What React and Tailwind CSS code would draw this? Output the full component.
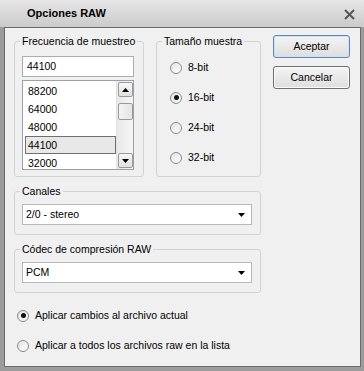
import React from 'react';

const Group = ({ label, className = '', children }) => (
    <fieldset className={`border border-[#d3d3d3] rounded-[3px] min-w-0 p-0 ${className}`}>
        <legend className="ml-[5px] px-[2px] leading-[13px] whitespace-nowrap">{label}</legend>
        {children}
    </fieldset>
);

const Radio = ({ checked, label }) => (
    <label className="flex items-center h-[13px] gap-[6px]">
        <span className="w-[12px] h-[12px] rounded-full border border-[#8a8a8a] bg-gradient-to-br from-[#e2e2e2] to-white flex items-center justify-center shrink-0">
            {checked && <span className="w-[5px] h-[5px] rounded-full bg-[#111]" />}
        </span>
        <span>{label}</span>
    </label>
);

const Arrow = ({ down }) => (
    <svg width="7" height="4" viewBox="0 0 7 4">
        <path d={down ? 'M0 0H7L3.5 4Z' : 'M0 4H7L3.5 0Z'} fill="#000" />
    </svg>
);

const Combo = ({ value }) => (
    <div className="mt-[6px] w-[230px] h-[21px] border border-[#b8b8b8] bg-white flex items-center justify-between pl-[3px] pr-[6px]">
        <span>{value}</span>
        <Arrow down />
    </div>
);

const Button = ({ children, primary }) => (
    <button
        className={`w-[77px] h-[23px] rounded-[3px] border bg-gradient-to-b from-[#f4f4f4] to-[#dedede] flex items-center justify-center ${
            primary ? 'border-[#5f86b6] shadow-[inset_0_0_0_1px_#cfe3f7]' : 'border-[#707070] shadow-[inset_0_0_0_1px_#fafafa]'
        }`}
    >
        {children}
    </button>
);

const rates = ['88200', '64000', '48000', '44100', '32000'];

const App = () => {
    return (
        <div className="w-[364px] h-[371px] bg-[#9c9c9c] flex flex-col font-['Liberation_Sans',Arial,sans-serif] text-[10.5px] leading-[13px] text-black">
            <div className="h-[27px] shrink-0 bg-gradient-to-b from-[#e6e6e6] to-[#cbcbcb] flex items-center justify-between pl-[27px] pr-[9px]">
                <span className="font-bold text-[11px]">Opciones RAW</span>
                <svg width="11" height="11" viewBox="0 0 11 11" className="mt-[1px]">
                    <path d="M1 1L10 10M10 1L1 10" stroke="#575757" strokeWidth="2" />
                </svg>
            </div>

            <div className="flex-1 ml-[4px] mr-[3px] mb-[4px] border border-[#6b6b6b] bg-[#f0f0f0] pl-[9px] pt-[7px]">
                <div className="flex items-stretch gap-[12px]">
                    <Group label="Frecuencia de muestreo" className="w-[130px]">
                        <div className="pl-[7px] pb-[6px]">
                            <div className="mt-[8px] w-[112px] h-[21px] border border-[#abadb3] bg-white flex items-center pl-[4px]">
                                44100
                            </div>
                            <div className="mt-[3px] w-[112px] h-[90px] border border-[#9da0a6] bg-white flex overflow-hidden">
                                <div className="flex-1 pt-[1px] pl-[2px]">
                                    {rates.map((r) => (
                                        <div
                                            key={r}
                                            className={`h-[18px] flex items-center pl-[2px] ${
                                                r === '44100' ? 'border border-[#6f6f6f] bg-[#e8e8e8]' : 'border border-transparent'
                                            }`}
                                        >
                                            {r}
                                        </div>
                                    ))}
                                </div>
                                <div className="w-[17px] bg-gradient-to-r from-[#e9e9e9] to-[#f6f6f6] border-l border-[#e2e2e2] flex flex-col items-center py-[1px]">
                                    <div className="w-[15px] h-[15px] border border-[#9a9a9a] rounded-[2px] bg-gradient-to-b from-[#f8f8f8] to-[#e0e0e0] flex items-center justify-center">
                                        <Arrow />
                                    </div>
                                    <div className="mt-[6px] w-[15px] h-[17px] border border-[#9a9a9a] rounded-[2px] bg-gradient-to-r from-[#f4f4f4] to-[#e4e4e4]" />
                                    <div className="flex-1" />
                                    <div className="w-[15px] h-[15px] border border-[#9a9a9a] rounded-[2px] bg-gradient-to-b from-[#f8f8f8] to-[#e0e0e0] flex items-center justify-center">
                                        <Arrow down />
                                    </div>
                                </div>
                            </div>
                        </div>
                    </Group>

                    <Group label="Tamaño muestra" className="w-[105px]">
                        <div className="mt-[13px] pl-[13px] flex flex-col gap-[17px]">
                            <Radio label="8-bit" />
                            <Radio label="16-bit" checked />
                            <Radio label="24-bit" />
                            <Radio label="32-bit" />
                        </div>
                    </Group>

                    <div className="flex flex-col gap-[8px]">
                        <Button primary>Aceptar</Button>
                        <Button>Cancelar</Button>
                    </div>
                </div>

                <Group label="Canales" className="mt-[8px] w-[247px]">
                    <div className="pl-[7px] pb-[9px]">
                        <Combo value="2/0 - stereo" />
                    </div>
                </Group>

                <Group label="Códec de compresión RAW" className="mt-[8px] w-[247px]">
                    <div className="pl-[7px] pb-[9px]">
                        <Combo value="PCM" />
                    </div>
                </Group>

                <div className="mt-[16px] ml-[3px] flex flex-col gap-[17px]">
                    <Radio label="Aplicar cambios al archivo actual" checked />
                    <Radio label="Aplicar a todos los archivos raw en la lista" />
                </div>
            </div>
        </div>
    );
};

export default App;
